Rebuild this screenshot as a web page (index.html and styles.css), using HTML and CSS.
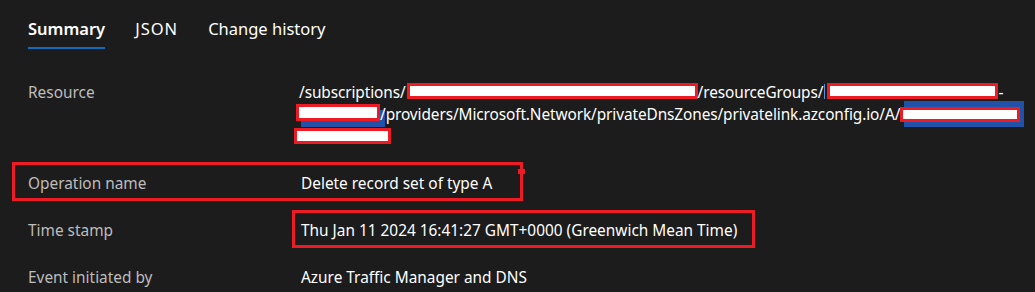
FILE: index.html
```html
<!DOCTYPE html>
<html lang="en">
<head>
<meta charset="utf-8">
<title>Activity log entry</title>
<link rel="stylesheet" href="styles.css">
</head>
<body>
<nav class="tabs">
  <span class="tab active">Summary</span>
  <span class="tab tab-wide">JSON</span>
  <span class="tab">Change history</span>
</nav>
<section class="details">
  <div class="row">
    <div class="label">Resource</div>
    <div class="value path">/subscriptions/<span class="redact r1"></span>/resourceGroups/<span class="caret"></span><span class="redact r2"></span>-<br><span class="redact r3"></span>/providers/Microsoft.Network/privateDnsZones/privatelink.azconfig.io/A/<span class="redact r4"></span><br><span class="redact r5"></span></div>
  </div>
  <div class="row annotated">
    <div class="label">Operation name</div>
    <div class="value">Delete record set of type A</div>
    <span class="mark mark-op"></span>
  </div>
  <div class="row annotated">
    <div class="label">Time stamp</div>
    <div class="value">Thu Jan 11 2024 16:41:27 GMT+0000 (Greenwich Mean Time)</div>
    <span class="mark mark-time"></span>
  </div>
  <div class="row">
    <div class="label">Event initiated by</div>
    <div class="value">Azure Traffic Manager and DNS</div>
  </div>
</section>
</body>
</html>
```
FILE: styles.css
```css
html, body {
  margin: 0;
  padding: 0;
  background: #1c1c1c;
  color: #ffffff;
  font-family: "Noto Sans", "Open Sans", sans-serif;
  overflow: hidden;
}

.tabs {
  display: flex;
  gap: 30px;
  padding: 17px 0 0 28px;
}

.tab {
  font-size: 16.5px;
  line-height: 24px;
  padding-bottom: 6px;
  border-bottom: 2px solid transparent;
  color: #ffffff;
}

.tab-wide {
  letter-spacing: 1px;
}

.tab.active {
  font-weight: 600;
  border-bottom-color: #0f6cbd;
}

.details {
  margin-top: 19px;
  padding-left: 28px;
}

.row {
  display: flex;
  padding: 14px 0 11px;
  font-size: 15.4px;
  line-height: 22px;
}

.annotated {
  position: relative;
}

.label {
  flex: 0 0 273px;
  color: #bdbdbd;
}

.value {
  flex: 1;
  color: #ffffff;
}

.path {
  margin-left: -2px;
  letter-spacing: -0.1px;
  white-space: nowrap;
}

.redact {
  display: inline-block;
  box-sizing: border-box;
  vertical-align: top;
  border: 3px solid #ed1c24;
  background: #ffffff;
}

.r1 { width: 291px; height: 16px; margin-top: 1px; margin-left: 1px; }
.r2 { width: 171px; height: 16px; margin-top: 1px; }
.r3 { width: 84px; height: 17px; margin-top: 0; margin-left: -3px; box-shadow: 5px 6px 0 0 #2151a8; }
.r4 { width: 120px; height: 15px; margin-top: 3px; box-shadow: 4px -6px 0 0 #2151a8, 4px 5px 0 0 #2151a8; }
.r5 { width: 97px; height: 16px; margin-top: 2px; margin-left: -5px; }

.caret {
  display: inline-block;
  width: 1px;
  height: 15px;
  margin: 2px 2px 0 1px;
  vertical-align: top;
  background: #5b8fd6;
}

.mark {
  position: absolute;
  box-sizing: border-box;
  border: 3px solid #ed1c24;
  pointer-events: none;
}

.mark-op {
  left: -16px;
  top: 3px;
  width: 511px;
  height: 39px;
}

.mark-op::after {
  content: "";
  position: absolute;
  right: -5px;
  top: 4px;
  width: 7px;
  height: 5px;
  background: #ed1c24;
}

.mark-time {
  left: 264px;
  top: 4px;
  width: 463px;
  height: 38px;
}
```
